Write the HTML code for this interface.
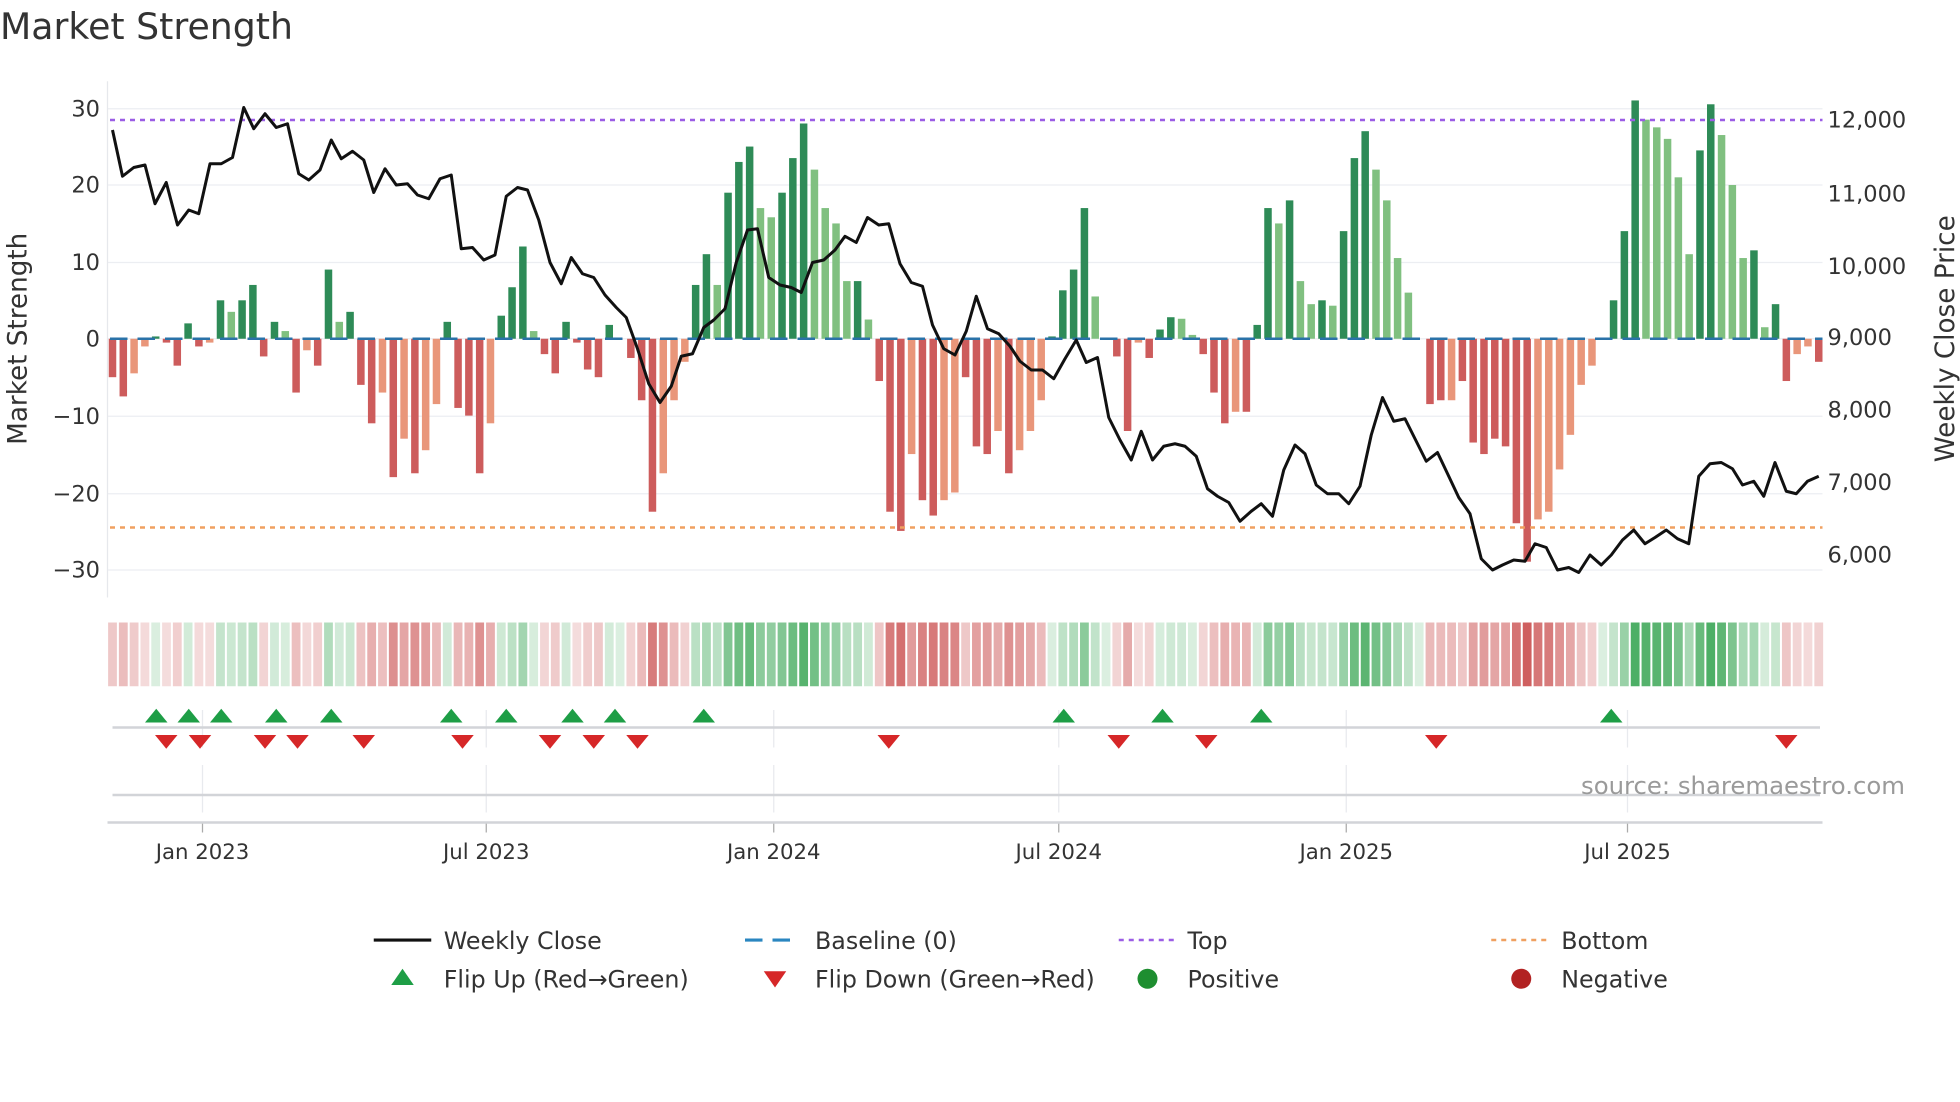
<!DOCTYPE html>
<html><head><meta charset="utf-8"><style>
html,body{margin:0;padding:0;background:#fff;width:1960px;height:1102px;overflow:hidden}
svg{display:block}
text{font-family:"DejaVu Sans","Liberation Sans",sans-serif;fill:#333}
</style></head><body>
<svg id="s" width="1960" height="1102" viewBox="0 0 1568 881.6" xmlns="http://www.w3.org/2000/svg">
<text x="0" y="31" font-size="29" fill="#333">Market Strength</text>
<g id="grid" stroke="#eceef2" stroke-width="1"></g>
<line x1="86" y1="65" x2="86" y2="478" stroke="#e6e8ec" stroke-width="1"/>
<g font-size="18" text-anchor="end">
<text x="80" y="93">30</text><text x="80" y="154">20</text><text x="80" y="216">10</text><text x="80" y="277">0</text>
<text x="80" y="339">−10</text><text x="80" y="401">−20</text><text x="80" y="462">−30</text>
</g>
<g font-size="18" text-anchor="start">
<text x="1462" y="102">12,000</text><text x="1462" y="161">11,000</text><text x="1462" y="219">10,000</text>
<text x="1462" y="276">9,000</text><text x="1462" y="334">8,000</text><text x="1462" y="392">7,000</text><text x="1462" y="450">6,000</text>
</g>
<text transform="translate(21,271) rotate(-90)" font-size="21" text-anchor="middle">Market Strength</text>
<text transform="translate(1563,271) rotate(-90)" font-size="21" text-anchor="middle">Weekly Close Price</text>
<g id="bars"></g>
<line x1="88" y1="271" x2="1458" y2="271" stroke="#2a72a8" stroke-width="2" stroke-dasharray="14,8"/>
<line x1="88" y1="96" x2="1458" y2="96" stroke="#9b5de5" stroke-width="2" stroke-dasharray="4,4"/>
<line x1="88" y1="422" x2="1458" y2="422" stroke="#f0a060" stroke-width="2" stroke-dasharray="4,4"/>
<polyline id="price" fill="none" stroke="#111" stroke-width="2.4" stroke-linejoin="round"></polyline>
<g id="heat"></g>
<g id="vg" stroke="#e8eaee" stroke-width="1"></g>
<line x1="90" y1="582" x2="1456" y2="582" stroke="#d2d4d8" stroke-width="2"/>
<line x1="90" y1="636" x2="1456" y2="636" stroke="#d2d4d8" stroke-width="2"/>
<line x1="86" y1="658" x2="1458" y2="658" stroke="#d2d4d8" stroke-width="2"/>
<g id="flips"></g>
<text x="1524" y="635" font-size="19.5" text-anchor="end" style="fill:#9a9a9a">source: sharemaestro.com</text>
<g font-size="17" text-anchor="middle">
<text x="162" y="687">Jan 2023</text><text x="389" y="687">Jul 2023</text><text x="619" y="687">Jan 2024</text>
<text x="847" y="687">Jul 2024</text><text x="1077" y="687">Jan 2025</text><text x="1302" y="687">Jul 2025</text>
</g>
<g font-size="19">
<line x1="299" y1="752" x2="345" y2="752" stroke="#111" stroke-width="2.5"/><text x="355" y="759">Weekly Close</text>
<line x1="596" y1="752" x2="640" y2="752" stroke="#2a86c0" stroke-width="2.5" stroke-dasharray="14,8"/><text x="652" y="759">Baseline (0)</text>
<line x1="895" y1="752" x2="940" y2="752" stroke="#9b5de5" stroke-width="2" stroke-dasharray="4,4"/><text x="950" y="759">Top</text>
<line x1="1193" y1="752" x2="1238" y2="752" stroke="#f0a060" stroke-width="2" stroke-dasharray="4,4"/><text x="1249" y="759">Bottom</text>
<polygon points="313,788 331,788 322,775" fill="#1e9e46"/><text x="355" y="790">Flip Up (Red→Green)</text>
<polygon points="611,777 629,777 620,790" fill="#d62728"/><text x="652" y="790">Flip Down (Green→Red)</text>
<circle cx="918" cy="783" r="8" fill="#1e8e30"/><text x="950" y="790">Positive</text>
<circle cx="1217" cy="783" r="8" fill="#b22222"/><text x="1249" y="790">Negative</text>
</g>
</svg>
<script>
var NS="http://www.w3.org/2000/svg";
function el(p,t,a){var e=document.createElementNS(NS,t);for(var k in a)e.setAttribute(k,a[k]);p.appendChild(e);return e;}
var g=document.getElementById('grid');
[87,148,210,271,333,395,456].forEach(function(y){el(g,'line',{x1:86,x2:1458,y1:y,y2:y});});
var vg=document.getElementById('vg');
[162,389,619,847,1077,1302].forEach(function(x){el(vg,'line',{x1:x,x2:x,y1:568,y2:598});el(vg,'line',{x1:x,x2:x,y1:612,y2:650});el(vg,'line',{x1:x,x2:x,y1:658,y2:666,stroke:'#aaa'});});
var B=[[-5,0],[-7.5,0],[-4.5,1],[-1,1],[0.3,0],[-0.5,0],[-3.5,0],[2,0],[-1,0],[-0.5,1],[5,0],[3.5,1],[5,0],[7,0],[-2.3,0],[2.2,0],[1,1],[-7,0],[-1.5,1],[-3.5,0],[9,0],[2.2,1],[3.5,0],[-6,0],[-11,0],[-7,1],[-18,0],[-13,1],[-17.5,0],[-14.5,1],[-8.5,1],[2.2,0],[-9,0],[-10,0],[-17.5,0],[-11,1],[3,0],[6.7,0],[12,0],[1,1],[-2,0],[-4.5,0],[2.2,0],[-0.5,0],[-4,0],[-5,0],[1.8,0],[0,0],[-2.5,0],[-8,0],[-22.5,0],[-17.5,1],[-8,1],[-3,1],[7,0],[11,0],[7,1],[19,0],[23,0],[25,0],[17,1],[15.8,1],[19,0],[23.5,0],[28,0],[22,1],[17,1],[15,1],[7.5,1],[7.5,0],[2.5,1],[-5.5,0],[-22.5,0],[-25,0],[-15,1],[-21,0],[-23,0],[-21,1],[-20,1],[-5,0],[-14,0],[-15,0],[-12,1],[-17.5,0],[-14.5,1],[-12,1],[-8,1],[0.3,0],[6.3,0],[9,0],[17,0],[5.5,1],[0,0],[-2.3,0],[-12,0],[-0.5,1],[-2.5,0],[1.2,0],[2.8,0],[2.6,1],[0.5,1],[-2,0],[-7,0],[-11,0],[-9.5,1],[-9.5,0],[1.8,0],[17,0],[15,1],[18,0],[7.5,1],[4.5,1],[5,0],[4.3,1],[14,0],[23.5,0],[27,0],[22,1],[18,1],[10.5,1],[6,1],[0,0],[-8.5,0],[-8,0],[-8,1],[-5.5,0],[-13.5,0],[-15,0],[-13,0],[-14,0],[-24,0],[-29,0],[-23.5,1],[-22.5,1],[-17,1],[-12.5,1],[-6,1],[-3.5,1],[0,0],[5,0],[14,0],[31,0],[28.5,1],[27.5,1],[26,1],[21,1],[11,1],[24.5,0],[30.5,0],[26.5,1],[20,1],[10.5,1],[11.5,0],[1.5,1],[4.5,0],[-5.5,0],[-2,1],[-1,1],[-3,0]];
var n=B.length,x0=90,x1=1455,dx=(x1-x0)/(n-1);
var bg=document.getElementById('bars'),hg=document.getElementById('heat');
B.forEach(function(b,i){var v=b[0],x=x0+i*dx,h=Math.abs(v)*6.15,c;
 if(v>=0)c=b[1]?'#80c080':'#2e8b57';else c=b[1]?'#e9967a':'#cd5c5c';
 if(h>0.5)el(bg,'rect',{x:x-3,y:v>=0?271-h:271,width:6,height:h,fill:c});
 var a=0.18+0.72*Math.min(1,Math.abs(v)/30);
 el(hg,'rect',{x:x-dx/2+0.8,y:498,width:dx-1.6,height:51,fill:v>=0?'#3aa655':'#c84848','fill-opacity':a});
});
var P=[[90,104],[98,141],[107,134],[116,132],[124,163],[133,146],[142,180],[151,168],[159,171],[168,131],[177,131],[186,126],[195,86],[203,103],[212,91],[221,102],[230,99],[239,139],[247,144],[256,136],[265,112],[273,127],[282,121],[291,128],[299,154],[308,135],[317,148],[326,147],[334,156],[343,159],[352,143],[361,140],[369,199],[378,198],[387,208],[396,204],[405,157],[414,150],[422,152],[431,176],[440,210],[449,227],[457,206],[466,219],[475,222],[484,236],[493,246],[501,254],[510,279],[519,307],[528,322],[537,309],[545,285],[554,283],[563,262],[571,256],[580,247],[589,210],[598,184],[606,183],[615,222],[624,228],[633,230],[641,234],[650,210],[659,208],[668,200],[676,189],[685,194],[694,174],[703,180],[711,179],[720,211],[729,226],[738,229],[746,260],[755,279],[764,284],[773,265],[781,237],[790,263],[799,267],[808,277],[816,289],[825,296],[834,296],[843,303],[852,287],[861,272],[869,290],[878,286],[887,334],[896,352],[905,368],[913,345],[922,368],[931,357],[940,355],[948,357],[957,365],[966,391],[974,397],[983,402],[992,417],[1001,409],[1009,403],[1018,413],[1027,376],[1036,356],[1044,363],[1053,388],[1062,395],[1071,395],[1079,403],[1088,389],[1097,348],[1106,318],[1115,337],[1124,335],[1133,353],[1141,369],[1150,362],[1159,381],[1167,398],[1176,411],[1185,447],[1194,456],[1202,452],[1211,448],[1220,449],[1228,435],[1237,438],[1246,456],[1255,454],[1263,458],[1272,444],[1281,452],[1289,444],[1298,432],[1307,424],[1316,435],[1324,430],[1333,424],[1342,431],[1351,435],[1359,381],[1368,371],[1377,370],[1386,375],[1394,388],[1403,385],[1411,397],[1420,370],[1429,393],[1437,395],[1446,385],[1455,381]];
document.getElementById('price').setAttribute('points',P.map(function(p){return p.join(',')}).join(' '));
var fg=document.getElementById('flips');
[125,151,177,221,265,361,405,458,492,563,851,930,1009,1289].forEach(function(x){el(fg,'polygon',{points:(x-9)+',578 '+(x+9)+',578 '+x+',567',fill:'#1e9e46'});});
[133,160,212,238,291,370,440,475,510,711,895,965,1149,1429].forEach(function(x){el(fg,'polygon',{points:(x-9)+',588 '+(x+9)+',588 '+x+',599',fill:'#d62728'});});
</script>
</body></html>
